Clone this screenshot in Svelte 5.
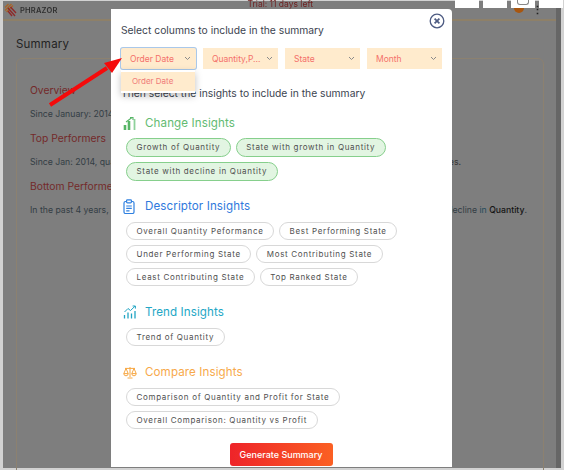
<script>
  const selects = ["Order Date", "Quantity,P...", "State", "Month"];

  const groups = [
    {
      title: "Change Insights",
      kind: "change",
      chips: ["Growth of Quantity", "State with growth in Quantity", "State with decline in Quantity"],
    },
    {
      title: "Descriptor Insights",
      kind: "descriptor",
      chips: [
        "Overall Quantity Peformance",
        "Best Performing State",
        "Under Performing State",
        "Most Contributing State",
        "Least Contributing State",
        "Top Ranked State",
      ],
    },
    { title: "Trend Insights", kind: "trend", chips: ["Trend of Quantity"] },
    {
      title: "Compare Insights",
      kind: "compare",
      chips: ["Comparison of Quantity and Profit for State", "Overall Comparison: Quantity vs Profit"],
    },
  ];
</script>

<div class="screen">
  <div class="page">
    <header class="topbar">
      <div class="brand">
        <svg width="13" height="14" viewBox="0 0 13 14" fill="none" stroke-width="1.4">
          <path d="M1 4.5 L4.5 1 M1 7.5 L7.5 1 M2.5 9 L9 2.5" stroke="#a8662a" />
          <path d="M4 5 L11 13 M6.5 4 L12 10 M4 8 L8 13" stroke="#8e2a2a" />
        </svg>
        <span>PHRAZOR</span>
      </div>
      <div class="trial">Trial: 11 days left</div>
      <div class="tools">
        <span class="avatar"></span>
        <span class="dots">⋮</span>
      </div>
    </header>

    <div class="content">
      <h1>Summary</h1>
      <div class="card">
        <h2>Overview</h2>
        <p>Since January: 2014</p>
        <h2>Top Performers</h2>
        <p class="split"><span>Since Jan: 2014, qua</span><span class="tail-a">es.</span></p>
        <h2>Bottom Performers</h2>
        <p class="split">
          <span>In the past 4 years, Q</span>
          <span class="tail-b">decline <i>in</i> <b>Quantity</b>.</span>
        </p>
      </div>
    </div>
  </div>
  <div class="scrollbar"></div>

  <div class="tabs">
    <span></span><span></span><span class="cup"></span><span></span>
  </div>

  <section class="modal">
    <button class="close" aria-label="Close">
      <svg width="16" height="16" viewBox="0 0 16 16" fill="none" stroke="#4d5b82">
        <circle cx="8" cy="8" r="6.8" stroke-width="1.3" />
        <path d="M5.6 5.6 L10.4 10.4 M10.4 5.6 L5.6 10.4" stroke-width="1.7" />
      </svg>
    </button>

    <p class="lead">Select columns to include in the summary</p>

    <div class="selects">
      {#each selects as label, i}
        <div class="select" class:focused={i === 0}>
          <span>{label}</span>
          <svg width="7" height="5" viewBox="0 0 7 5" fill="none" stroke="#8a8a8a" stroke-width="1">
            <path d="M1 1 L3.5 3.5 L6 1" />
          </svg>
        </div>
      {/each}
      <div class="menu"><div class="option">Order Date</div></div>
    </div>

    <p class="lead then">Then select the insights to include in the summary</p>

    {#each groups as group}
      <div class="group {group.kind}">
        <div class="group-title">
          <span class="icon">
            {#if group.kind === "change"}
              <svg width="14" height="15" viewBox="0 0 14 15" fill="none" stroke="#57b567">
                <path d="M2 14 V9 M6 14 V5" stroke-width="2.6" />
                <path d="M11.5 14 V3" stroke-width="1.8" stroke="#8fd19b" />
                <path d="M3 6 L9 1.5 M7 1.5 H10 V4" stroke-width="1.1" />
              </svg>
            {:else if group.kind === "descriptor"}
              <svg width="12" height="15" viewBox="0 0 12 15" fill="none" stroke="#2f80e0" stroke-width="1.2">
                <rect x="1" y="2.5" width="10" height="12" rx="1.5" />
                <rect x="3.6" y="0.8" width="4.8" height="3" rx="0.8" fill="#fff" />
                <path d="M3.2 7 H8.8 M3.2 9.4 H8.8 M3.2 11.8 H6.5" />
              </svg>
            {:else if group.kind === "trend"}
              <svg width="14" height="14" viewBox="0 0 14 14" fill="none" stroke="#21a5c4">
                <path d="M1.5 7 L5 3.5 L7.5 5.5 L12 1.2 M9.6 1 H12.4 V3.6" stroke-width="1" />
                <path d="M1.5 13.5 V10 M5 13.5 V7.5 M8.5 13.5 V8.5 M12 13.5 V6" stroke-width="1.3" />
              </svg>
            {:else}
              <svg width="14" height="13" viewBox="0 0 14 13" fill="none" stroke="#f7a845" stroke-width="1">
                <path d="M7 1 V11 M4.5 12 H9.5 M2 2.4 H12" />
                <path d="M3 2.4 L0.8 7.6 H5.2 Z M11 2.4 L8.8 7.6 H13.2 Z" />
                <path d="M0.8 7.6 A2.2 2.2 0 0 0 5.2 7.6 M8.8 7.6 A2.2 2.2 0 0 0 13.2 7.6" />
              </svg>
            {/if}
          </span>
          <span class="title-text">{group.title}</span>
        </div>
        <div class="chips">
          {#each group.chips as chip}
            <span class="chip">{chip}</span>
          {/each}
        </div>
      </div>
    {/each}

    <div class="actions">
      <button class="generate">Generate Summary</button>
    </div>
  </section>

  <svg class="arrow" width="564" height="470" viewBox="0 0 564 470" fill="none">
    <path d="M50 105 L107 68" stroke="#f50a0a" stroke-width="4" />
    <path d="M122 58 L104 63 L112 73 Z" fill="#f50a0a" />
  </svg>
</div>

<style>
  :global(body) {
    margin: 0;
    background: #d2d2d2;
    font-family: Inter, "Open Sans", "Liberation Sans", sans-serif;
  }
  /* the reference is a slightly soft, upscaled capture */
  .screen {
    box-sizing: border-box;
    display: flex;
    filter: blur(0.35px);
    height: 470px;
    overflow: hidden;
    padding-left: 3px;
    position: relative;
    width: 564px;
  }
  .page {
    background: #7e7e7e;
    color: #333;
    height: 467px;
    margin-top: 1px;
    width: 553px;
  }
  .scrollbar {
    background: #666;
    height: 467px;
    margin-top: 1px;
    width: 5px;
  }

  .topbar {
    align-items: center;
    border-bottom: 2px solid #8e8068;
    box-sizing: border-box;
    display: flex;
    height: 20px;
    position: relative;
  }
  .brand {
    align-items: center;
    color: #2f2f2f;
    display: flex;
    font-size: 7.5px;
    font-weight: 600;
    gap: 3px;
    letter-spacing: 0.2px;
    padding-left: 1px;
  }
  .trial {
    color: #6e1f1f;
    font-size: 8.5px;
    margin-left: 190px;
    margin-top: -12px;
  }
  .tools {
    align-items: center;
    display: flex;
    gap: 8px;
    margin-left: auto;
    padding-right: 13px;
  }
  .avatar {
    background: #a8560f;
    border-radius: 50%;
    height: 10px;
    margin-top: -4px;
    width: 10px;
  }
  .dots {
    color: #222;
    font-size: 11px;
    font-weight: 700;
  }

  .content {
    padding: 14px 12px 0 13px;
  }
  h1 {
    color: #232323;
    font-size: 11.5px;
    font-weight: 400;
    letter-spacing: 0.2px;
    line-height: 18px;
    margin: 0 0 5px;
  }
  .card {
    border: 1px solid #8c8170;
    border-radius: 6px;
    box-sizing: border-box;
    height: 420px;
    padding: 24px 13px 0;
  }
  h2 {
    color: #742a2a;
    font-size: 10.3px;
    font-weight: 400;
    line-height: 14px;
    margin: 0 0 10px;
  }
  .card p {
    color: #333d44;
    font-size: 8.7px;
    line-height: 14px;
    margin: 0 0 10px;
    overflow: hidden;
    white-space: nowrap;
  }
  .split {
    display: flex;
    justify-content: space-between;
  }
  .tail-a {
    color: #333;
    margin-right: 69px;
  }
  .tail-b {
    margin-right: 3px;
  }
  .tail-b i {
    color: #234a5a;
    font-style: normal;
  }
  .tail-b b {
    color: #151515;
    font-weight: 500;
  }

  .tabs {
    display: flex;
    gap: 4px;
    left: 455px;
    position: absolute;
    top: 0;
  }
  .tabs span {
    background: #fff;
    height: 8px;
    width: 24px;
  }
  .tabs .cup {
    position: relative;
  }
  .tabs .cup::after {
    border: 1px solid #888;
    border-radius: 0 0 3px 3px;
    border-top: 0;
    content: "";
    height: 4px;
    left: 6px;
    position: absolute;
    top: 0;
    width: 10px;
  }

  .modal {
    background: #fff;
    border-radius: 0 4px 0 0;
    box-sizing: border-box;
    color: #333;
    height: 458px;
    left: 111px;
    padding: 14px 10px 0 10px;
    position: absolute;
    top: 9px;
    width: 341px;
  }
  .close {
    background: none;
    border: 0;
    display: block;
    height: 16px;
    padding: 0;
    position: absolute;
    right: 7px;
    top: 4px;
  }
  .lead {
    color: #3c4450;
    font-size: 10.3px;
    line-height: 14px;
    margin: 0;
  }
  .selects {
    display: grid;
    gap: 7px;
    grid-template-columns: repeat(4, 75px);
    margin-top: 11px;
    position: relative;
  }
  .select {
    align-items: center;
    background: #ffebcd;
    box-sizing: border-box;
    color: #f4706a;
    display: flex;
    font-size: 8.5px;
    height: 21px;
    justify-content: space-between;
    padding: 0 5px 0 9px;
  }
  .select.focused {
    border-radius: 2px;
    box-shadow: 0 0 0 1px #a9c8ea;
  }
  .menu {
    background: #fff;
    box-shadow: 0 3px 7px rgba(0, 0, 0, 0.25);
    left: 0;
    padding: 2px 0;
    position: absolute;
    top: 22px;
    width: 74px;
  }
  .option {
    background: #ffebcd;
    color: #ef7a78;
    font-size: 8px;
    line-height: 19px;
    padding-left: 11px;
  }
  .then {
    margin-top: 17px;
  }

  .group {
    margin-top: 18px;
  }
  .then + .group {
    margin-top: 15px;
  }
  .group.descriptor {
    margin-top: 17px;
  }
  .group-title {
    align-items: center;
    display: flex;
    height: 16px;
  }
  .icon {
    display: flex;
    margin-left: 2px;
    width: 22px;
  }
  .title-text {
    font-size: 11.6px;
    letter-spacing: 0.1px;
  }
  .change .title-text { color: #63bb72; }
  .descriptor .title-text { color: #2f79dd; }
  .trend .title-text { color: #23a7c6; }
  .compare .title-text { color: #f7a94b; }

  .chips {
    display: flex;
    flex-wrap: wrap;
    gap: 5px;
    margin: 8px 0 0 5px;
  }
  .change .chips {
    margin-top: 7px;
  }
  .chip {
    border: 1px solid #d8d8d8;
    border-radius: 10px;
    box-sizing: border-box;
    color: #4f4f4f;
    font-size: 8px;
    height: 18px;
    letter-spacing: 0.68px;
    line-height: 16px;
    padding: 0 9.5px;
    white-space: nowrap;
  }
  .change .chip {
    background: #e2f5e2;
    border-color: #86cf8c;
    height: 19px;
    line-height: 17px;
  }

  .actions {
    display: flex;
    justify-content: center;
    margin-top: 14px;
    padding-right: 1px;
  }
  .generate {
    background: linear-gradient(90deg, #ee2429, #fb6023);
    border: 0;
    border-radius: 3px;
    color: #fff;
    font-family: inherit;
    font-size: 9px;
    font-weight: 500;
    height: 23px;
    padding: 0;
    width: 103px;
  }
  .arrow {
    left: 0;
    pointer-events: none;
    position: absolute;
    top: 0;
  }
</style>
